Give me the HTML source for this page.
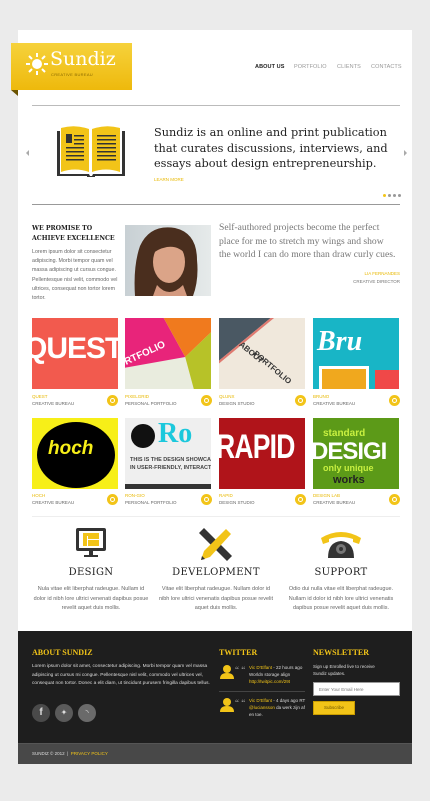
<!DOCTYPE html>
<html><head><meta charset="utf-8"><style>
*{margin:0;padding:0;box-sizing:border-box}
body{width:430px;height:801px;background:#ebebeb;position:relative;overflow:hidden;font-family:"Liberation Sans",sans-serif}
.a{position:absolute}
.serif{font-family:"DejaVu Serif","Liberation Serif",serif}
.wrap{left:18px;top:30px;width:394px;height:734px;background:#fff}
.nav{top:64px;font-size:5.5px;color:#999;letter-spacing:.1px}
.tile{width:86px;height:71px;overflow:hidden}
.cap1{font-size:4.5px;color:#e8b800}
.cap2{font-size:4.5px;color:#666}
.mag{width:11px;height:11px;border-radius:50%;background:#f2c418}
.mag:after{content:"";position:absolute;left:3px;top:3px;width:3px;height:3px;border:1px solid #fff;border-radius:50%}
.svc{font-size:5.5px;color:#666;text-align:center;line-height:9.5px;width:116px}
.svh{font-size:10px;color:#222;text-align:center;width:116px;letter-spacing:.3px}
.fh{font-size:8px;color:#f2c418;font-weight:bold;font-family:"Liberation Serif",serif}
.ft{font-size:4.8px;color:#ddd;line-height:8.5px}
</style></head><body>
<div class="a wrap"></div>
<div class="a" style="left:11px;top:90px;width:7px;height:6px;background:#6b5300;clip-path:polygon(0 0,100% 0,100% 100%)"></div>
<div class="a" style="left:11px;top:43px;width:121px;height:47px;background:linear-gradient(#f6d23c,#eeb90c)"></div>
<svg class="a" style="left:26px;top:53px" width="22" height="22" viewBox="0 0 22 22"><circle cx="11" cy="11" r="5" fill="#fff"/><g stroke="#fff" stroke-width="2"><line x1="11" y1="0" x2="11" y2="4"/><line x1="11" y1="18" x2="11" y2="22"/><line x1="0" y1="11" x2="4" y2="11"/><line x1="18" y1="11" x2="22" y2="11"/><line x1="3" y1="3" x2="6" y2="6"/><line x1="16" y1="16" x2="19" y2="19"/><line x1="3" y1="19" x2="6" y2="16"/><line x1="16" y1="6" x2="19" y2="3"/></g></svg>
<div class="a serif" style="left:50px;top:49px;font-size:19px;color:#fff;line-height:20px">Sundiz</div>
<div class="a" style="left:51px;top:72px;font-size:4px;color:#8a6a00;letter-spacing:.3px">CREATIVE BUREAU</div>
<div class="a nav" style="left:255px;color:#222;font-weight:bold">ABOUT US</div>
<div class="a nav" style="left:294px">PORTFOLIO</div>
<div class="a nav" style="left:337px">CLIENTS</div>
<div class="a nav" style="left:371px">CONTACTS</div>
<div class="a" style="left:32px;top:105px;width:368px;height:1px;background:#bbb"></div>
<div class="a" style="left:23px;top:150px;border:3px solid transparent;border-right:3px solid #aaa;width:0"></div>
<div class="a" style="left:404px;top:150px;border:3px solid transparent;border-left:3px solid #aaa;width:0"></div>
<svg class="a" style="left:57px;top:125px" width="68" height="26" overflow="visible">
<path d="M0 6h3v43h29l1 2h2l1-2h29v-43h3v45h-30v1h-8v-1h-30z" fill="#333"/>
<path d="M4 3q14-4 28 1v43q-14-5-28 0z" fill="#f2c418"/>
<path d="M35 4q14-5 28-1v44q-14-5-28 0z" fill="#f2c418"/>
<rect x="9" y="9" width="6" height="9" fill="#333"/>
<g fill="#333"><rect x="17" y="10" width="10" height="1.5"/><rect x="17" y="14" width="10" height="1.5"/><rect x="17" y="18" width="10" height="1.5"/><rect x="9" y="22" width="18" height="1.5"/><rect x="9" y="26" width="18" height="1.5"/><rect x="9" y="30" width="18" height="1.5"/><rect x="9" y="34" width="18" height="1.5"/>
<rect x="40" y="10" width="19" height="1.5"/><rect x="40" y="14" width="19" height="1.5"/><rect x="40" y="18" width="19" height="1.5"/><rect x="40" y="22" width="19" height="1.5"/><rect x="40" y="26" width="19" height="1.5"/><rect x="40" y="30" width="19" height="1.5"/><rect x="40" y="34" width="19" height="1.5"/></g></svg>
<div class="a serif" style="left:154px;top:125px;font-size:11.3px;line-height:15.5px;color:#222;width:250px">Sundiz is an online and print publication that curates discussions, interviews, and essays about design entrepreneurship.</div>
<div class="a" style="left:154px;top:177px;font-size:4.5px;color:#e8b800">LEARN MORE</div>
<div class="a" style="left:383px;top:194px;width:3px;height:3px;border-radius:50%;background:#f2c418;box-shadow:5px 0 #999,10px 0 #999,15px 0 #999"></div>
<div class="a" style="left:32px;top:204px;width:368px;height:1px;background:#999"></div>
<div class="a serif" style="left:32px;top:224px;font-size:6.2px;line-height:9.5px;font-weight:bold;color:#222">WE PROMISE TO<br>ACHIEVE EXCELLENCE</div>
<div class="a" style="left:32px;top:248px;font-size:5.3px;line-height:9.2px;color:#666;width:88px">Lorem ipsum dolor sit consectetur adipiscing. Morbi tempor quam vel massa adipiscing ut cursus congue. Pellentesque nisl velit, commodo vel ultrices, consequat non tortor lorem tortor.</div>
<svg class="a" style="left:125px;top:225px" width="86" height="71"><defs><linearGradient id="bg" x1="0" x2="1"><stop offset="0" stop-color="#c8d0d4"/><stop offset="1" stop-color="#e6eaea"/></linearGradient></defs><rect width="86" height="71" fill="url(#bg)"/><path d="M10 71q-2-30 5-50q10-22 35-18q22 5 22 32q2 20 -4 36z" fill="#4a2e1e"/><ellipse cx="44" cy="37" rx="16" ry="21" fill="#dba488"/><path d="M26 30q6-20 24-16q14 2 14 20q-8-14-22-12q-10 2-16 8z" fill="#4a2e1e"/><path d="M32 60q12 14 26 0l4 11h-34z" fill="#d49a80"/></svg>
<div class="a" style="left:219px;top:221px;font-family:'Liberation Serif',serif;font-size:9.6px;line-height:13.5px;color:#777;white-space:nowrap">Self-authored projects become the perfect<br>place for me to stretch my wings and show<br>the world I can do more than draw curly cues.</div>
<div class="a" style="left:300px;top:271px;width:100px;text-align:right;font-size:4.5px;color:#e8b800">LIA FERNANDES</div>
<div class="a" style="left:300px;top:279px;width:100px;text-align:right;font-size:4.5px;color:#777">CREATIVE DIRECTOR</div>
<div class="a tile" style="left:32px;top:318px;background:#f25a4e"><div class="a" style="left:-8px;top:16px;font:bold 30px/30px 'Liberation Sans';color:#fff;letter-spacing:-1px">QUEST</div></div>
<div class="a tile" style="left:125px;top:318px;background:#e9ecde"><div class="a" style="left:0;top:0;width:86px;height:71px;background:#e8247a;clip-path:polygon(0 0,45% 0,70% 55%,0 70%)"></div><div class="a" style="left:0;top:0;width:86px;height:71px;background:#f07a1e;clip-path:polygon(45% 0,100% 0,100% 20%,70% 55%)"></div><div class="a" style="left:0;top:0;width:86px;height:71px;background:#b7c228;clip-path:polygon(70% 55%,100% 20%,100% 100%,80% 100%)"></div><div class="a" style="left:-2px;top:30px;font:bold 10px 'Liberation Sans';color:#fff;transform:rotate(-25deg)">RTFOLIO</div></div>
<div class="a tile" style="left:219px;top:318px;background:#f0e8dc"><div class="a" style="left:0;top:0;width:86px;height:71px;background:#4a5863;clip-path:polygon(0 0,60% 0,0 60%)"></div><div class="a" style="left:0;top:0;width:86px;height:71px;background:#e07a70;clip-path:polygon(60% 0,64% 0,0 64%,0 60%)"></div><div class="a" style="left:18px;top:30px;font:bold 8px 'Liberation Sans';color:#333;transform:rotate(40deg)">ABOUT</div><div class="a" style="left:30px;top:45px;font:bold 8px 'Liberation Sans';color:#333;transform:rotate(40deg)">PORTFOLIO</div></div>
<div class="a tile" style="left:313px;top:318px;background:#18b5c6"><div class="a serif" style="left:4px;top:8px;font:italic bold 28px 'Liberation Serif';color:#fff">Bru</div><div class="a" style="left:6px;top:48px;width:50px;height:23px;background:#fff"></div><div class="a" style="left:9px;top:51px;width:44px;height:20px;background:#f0a81e"></div><div class="a" style="left:62px;top:52px;width:24px;height:19px;background:#f04848"></div></div>
<div class="a tile" style="left:32px;top:418px;background:#f7ef18"><div class="a" style="left:5px;top:4px;width:78px;height:66px;border-radius:50%;background:#000"></div><div class="a" style="left:16px;top:20px;font:italic bold 19px 'Liberation Sans';color:#f7ef18">hoch</div></div>
<div class="a tile" style="left:125px;top:418px;background:#efefef"><div class="a" style="left:6px;top:6px;width:24px;height:24px;border-radius:50%;background:#111"></div><div class="a" style="left:33px;top:0px;font:bold 28px 'Liberation Serif';color:#1cc8dc">Ro</div><div class="a" style="left:5px;top:38px;font:bold 5.5px/8px 'Liberation Sans';color:#444;white-space:nowrap">THIS IS THE DESIGN SHOWCAS<br>IN USER-FRIENDLY, INTERACTIV</div><div class="a" style="left:0;top:66px;width:86px;height:5px;background:#333"></div></div>
<div class="a tile" style="left:219px;top:418px;background:#b0141a"><div class="a" style="left:-3px;top:10px;font:bold 34px 'Liberation Sans';color:#fff;transform:scaleX(.78);transform-origin:0 0;letter-spacing:-1px">RAPID</div></div>
<div class="a tile" style="left:313px;top:418px;background:#5c9a18"><div class="a" style="left:10px;top:10px;font:bold 10px 'Liberation Sans';color:#c8f040">standard</div><div class="a" style="left:-2px;top:20px;font:bold 24px 'Liberation Sans';color:#fff;letter-spacing:-1px">DESIGI</div><div class="a" style="left:10px;top:45px;font:bold 9px 'Liberation Sans';color:#c8f040">only unique</div><div class="a" style="left:20px;top:56px;font:bold 11px 'Liberation Sans';color:#222">works</div></div>
<div class="a cap1" style="left:32px;top:394px">QUEST</div><div class="a cap2" style="left:32px;top:401px">CREATIVE BUREAU</div><div class="a mag" style="left:107px;top:395px"></div>
<div class="a cap1" style="left:125px;top:394px">PIXELGRID</div><div class="a cap2" style="left:125px;top:401px">PERSONAL PORTFOLIO</div><div class="a mag" style="left:201px;top:395px"></div>
<div class="a cap1" style="left:219px;top:394px">QLUNX</div><div class="a cap2" style="left:219px;top:401px">DESIGN STUDIO</div><div class="a mag" style="left:295px;top:395px"></div>
<div class="a cap1" style="left:313px;top:394px">BRUNO</div><div class="a cap2" style="left:313px;top:401px">CREATIVE BUREAU</div><div class="a mag" style="left:389px;top:395px"></div>
<div class="a cap1" style="left:32px;top:493px">HOCH</div><div class="a cap2" style="left:32px;top:500px">CREATIVE BUREAU</div><div class="a mag" style="left:107px;top:494px"></div>
<div class="a cap1" style="left:125px;top:493px">RON-GIO</div><div class="a cap2" style="left:125px;top:500px">PERSONAL PORTFOLIO</div><div class="a mag" style="left:201px;top:494px"></div>
<div class="a cap1" style="left:219px;top:493px">RAPID</div><div class="a cap2" style="left:219px;top:500px">DESIGN STUDIO</div><div class="a mag" style="left:295px;top:494px"></div>
<div class="a cap1" style="left:313px;top:493px">DESIGN LAB</div><div class="a cap2" style="left:313px;top:500px">CREATIVE BUREAU</div><div class="a mag" style="left:389px;top:494px"></div>
<div class="a" style="left:32px;top:516px;width:368px;height:1px;background:#eee"></div>
<svg class="a" style="left:76px;top:528px" width="31" height="31"><rect x="0" y="0" width="30" height="23" rx="2" fill="#333"/><rect x="3" y="3" width="24" height="17" fill="#fff"/><rect x="7" y="5" width="16" height="13" fill="#f2c418"/><rect x="11" y="8" width="1" height="10" fill="#fff"/><rect x="11" y="11" width="12" height="1" fill="#fff"/><rect x="13" y="23" width="4" height="4" fill="#333"/><rect x="8" y="27" width="14" height="2" fill="#333"/></svg>
<svg class="a" style="left:199px;top:527px" width="34" height="34"><path d="M0 6l5-5 28 28-5 5z" fill="#333"/><path d="M32 7l-5-5-22 22-3 9 9-3z" fill="#f2c418"/><path d="M2 33l1-4 3 3z" fill="#333"/></svg>
<svg class="a" style="left:320px;top:530px" width="42" height="30"><path d="M1 8q20-12 40 0l-2 6-6-2v-3q-12-4-24 0v3l-6 2z" fill="#f2c418"/><path d="M8 28q0-16 13-17q13 1 13 17z" fill="#333"/><circle cx="21" cy="19" r="5" fill="#777"/><circle cx="21" cy="19" r="2" fill="#333"/></svg>
<div class="a svh serif" style="left:33px;top:567px">DESIGN</div>
<div class="a svh serif" style="left:158px;top:567px">DEVELOPMENT</div>
<div class="a svh serif" style="left:283px;top:567px">SUPPORT</div>
<div class="a svc" style="left:33px;top:585px">Nula vitae elit liberphat radeugue. Nullam id dolor id nibh lore ultrici venenati dapibus posue revelit aquet duis mollis.</div>
<div class="a svc" style="left:158px;top:585px">Vitae elit liberphat radeugue. Nullam dolor id nibh lore ultrici venenatis dapibus posue revelit aquet duis mollis.</div>
<div class="a svc" style="left:283px;top:585px">Odio dui nulla vitae elit liberphat radeugue. Nullam id dolor id nibh lore ultrici venenatis dapibus posue revelit aquet duis mollis.</div>
<div class="a" style="left:18px;top:631px;width:394px;height:112px;background:#1e1e1e"></div>
<div class="a" style="left:18px;top:743px;width:394px;height:21px;background:#484848;border-top:1px solid #555"></div>
<div class="a fh" style="left:32px;top:648px">ABOUT SUNDIZ</div>
<div class="a ft" style="left:32px;top:663px;width:180px">Lorem ipsum dolor sit amet, consectetur adipiscing. Morbi tempor quam vel massa adipiscing ut cursus mi congue. Pellentesque nisl velit, commodo vel ultrices vel, consequat non tortor. Donec a elit diam, ut tincidunt purusem fringilla dapibus tellus.</div>
<div class="a" style="left:32px;top:704px;width:18px;height:18px;border-radius:50%;background:#4a4a4a;color:#ddd;font:bold 10px/18px 'Liberation Sans';text-align:center">f</div>
<div class="a" style="left:55px;top:704px;width:18px;height:18px;border-radius:50%;background:#5a5a5a;color:#ddd;font:8px/18px 'DejaVu Sans';text-align:center">✦</div>
<div class="a" style="left:78px;top:704px;width:18px;height:18px;border-radius:50%;background:#6a6a6a;color:#ddd;font:8px/18px 'DejaVu Sans';text-align:center">◝</div>
<div class="a fh" style="left:219px;top:648px">TWITTER</div>
<svg class="a" style="left:219px;top:665px" width="26" height="14"><circle cx="8" cy="4" r="4" fill="#f2c418"/><path d="M1 14q0-6 7-6 7 0 7 6z" fill="#f2c418"/><text x="16" y="8" font-size="9" fill="#aaa" font-family="Liberation Serif">“ “</text></svg>
<div class="a ft" style="left:249px;top:664px;font-size:4.5px;line-height:7px;width:58px"><span style="color:#f2c418">Vic D'Elfant</span> - 22 hours ago Worldn storage align <span style="color:#f2c418">http://twitpic.com/29t</span></div>
<div class="a" style="left:219px;top:691px;width:86px;height:1px;background:#444"></div>
<svg class="a" style="left:219px;top:698px" width="26" height="14"><circle cx="8" cy="4" r="4" fill="#f2c418"/><path d="M1 14q0-6 7-6 7 0 7 6z" fill="#f2c418"/><text x="16" y="8" font-size="9" fill="#aaa" font-family="Liberation Serif">“ “</text></svg>
<div class="a ft" style="left:249px;top:697px;font-size:4.5px;line-height:7px;width:58px"><span style="color:#f2c418">Vic D'Elfant</span> - 4 days ago RT <span style="color:#f2c418">@luciansson</span> da werk zijn af en toe.</div>
<div class="a fh" style="left:313px;top:648px">NEWSLETTER</div>
<div class="a ft" style="left:313px;top:663px;font-size:4.5px;line-height:7px;width:70px">Sign up Enrolled live to receive Sundiz updates.</div>
<div class="a" style="left:313px;top:682px;width:87px;height:14px;background:#fff;border:1px solid #999;font-size:4.5px;color:#777;padding:4px 5px">Enter Your Email Here</div>
<div class="a" style="left:313px;top:701px;width:42px;height:14px;background:#f2c418;border:1px solid #c99c00;font-size:4.5px;color:#6b5300;text-align:center;line-height:12px">Subscribe</div>
<div class="a" style="left:32px;top:751px;font-size:4.5px;color:#ddd">SUNDIZ © 2012 &nbsp;|&nbsp; <span style="color:#f2c418">PRIVACY POLICY</span></div>
</body></html>
